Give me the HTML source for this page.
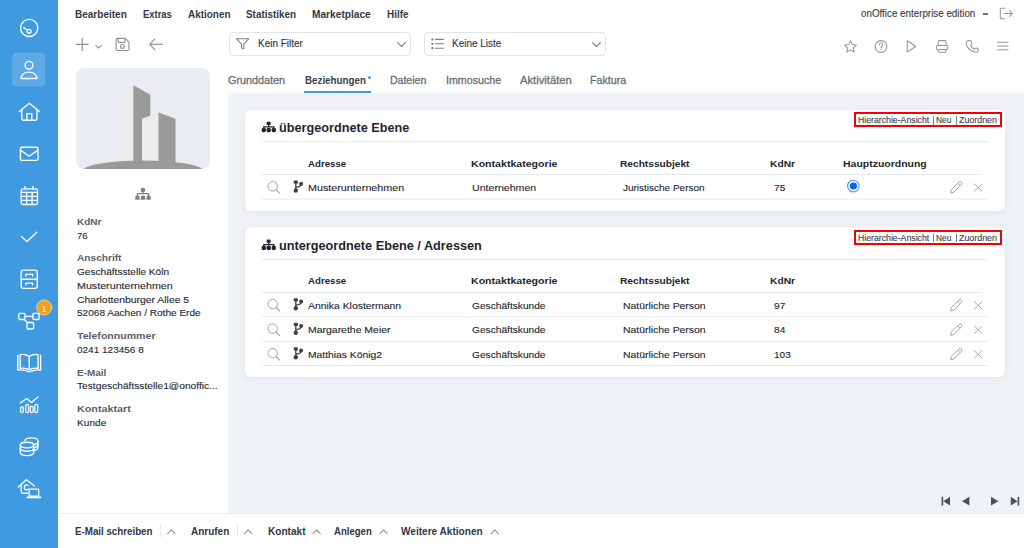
<!DOCTYPE html>
<html><head><meta charset="utf-8">
<style>
*{margin:0;padding:0;box-sizing:border-box}
html,body{width:1024px;height:548px;overflow:hidden;background:#fff;font-family:"Liberation Sans",sans-serif;color:#333}
.a{position:absolute;white-space:nowrap}
#sb{position:absolute;left:0;top:0;width:58px;height:548px;background:#3f9ae0}
#sb svg{position:absolute;left:0;top:0}
.menu{top:7px;font-size:10px;font-weight:bold;color:#333b47;line-height:14px}
.tab{top:73px;font-size:10.5px;color:#6c727b;line-height:14px}
#gray{position:absolute;left:228px;top:93px;width:796px;height:420px;background:#f0f3f6}
.card{position:absolute;left:245px;width:760px;background:#fff;border-radius:6px;box-shadow:0 0 1px rgba(40,60,90,0.06),0 2px 8px rgba(40,60,90,0.07)}
.ttl{font-size:12.7px;font-weight:bold;color:#1f2530;line-height:16px}
.hd{font-size:10.3px;font-weight:bold;color:#262c36;line-height:14px}
.td{font-size:10.4px;color:#262c36;line-height:14px}
.hl{position:absolute;height:1px;background:#e6eaef}
.red{position:absolute;border:2px solid #e2001a;font-size:9.1px;color:#333;line-height:10px;padding:0 0 0 2px}
.lbl{font-size:10.3px;font-weight:bold;color:#5f6670;line-height:14px}
.val{font-size:10.2px;color:#2f343b;line-height:14px}
.t{line-height:14px;transform-origin:0 0}
.bb{top:525px;font-size:10px;font-weight:bold;color:#2f3540;line-height:14px}
</style></head><body>

<div id="sb">
<svg width="58" height="548" viewBox="0 0 58 548" fill="none" stroke="#fff" stroke-width="1.35" stroke-linecap="round" stroke-linejoin="round">
 <!-- dashboard -->
 <circle cx="29.2" cy="27.9" r="8.6"/>
 <circle cx="29.1" cy="31.3" r="1.9"/>
 <line x1="23.6" y1="27.6" x2="27.4" y2="30"/>
 <!-- active -->
 <rect x="12" y="52.5" width="33.2" height="34" rx="4.5" fill="rgba(255,255,255,0.16)" stroke="none"/>
 <circle cx="29" cy="65.3" r="3.9"/>
 <path d="M21.1 78.5 C21.3 74.3 24.8 72.1 29 72.1 C33.2 72.1 36.7 74.3 36.9 78.5 Z"/>
 <!-- home -->
 <path d="M19.3 111.6 L29.3 103.2 L39.4 111.6"/>
 <path d="M21.8 109.6 V118.5 Q21.8 120.2 23.5 120.2 H35.3 Q37 120.2 37 118.5 V109.6"/>
 <path d="M26.9 120.2 V113.6 H31.8 V120.2"/>
 <!-- mail -->
 <rect x="20.4" y="147.2" width="17.6" height="13.2" rx="1.6"/>
 <path d="M20.8 150.4 L29.2 156.3 L37.6 150.4"/>
 <!-- calendar -->
 <rect x="21.2" y="188.9" width="16.3" height="15.6" rx="1.8"/>
 <line x1="21.2" y1="192.3" x2="37.5" y2="192.3"/>
 <line x1="25" y1="186.4" x2="25" y2="189"/><line x1="33" y1="186.4" x2="33" y2="189"/>
 <path d="M21.5 196.4 H37.3 M21.5 200.4 H37.3 M26.6 192.5 V204.3 M32.1 192.5 V204.3" stroke-width="1.3"/>
 <!-- check -->
 <path d="M21.4 236.6 L26.9 241.6 L36.8 232.3"/>
 <!-- cabinet -->
 <rect x="21.2" y="270.1" width="16" height="18.2" rx="2"/>
 <line x1="21.2" y1="279.2" x2="37.2" y2="279.2"/>
 <path d="M25.8 276 V274.4 H32.6 V276 M25.8 284.8 V283.2 H32.6 V284.8" stroke-width="1.3"/>
 <!-- network -->
 <rect x="18.8" y="313.3" width="6.2" height="6.2" rx="1.2" stroke-width="1.3"/>
 <rect x="32.9" y="313.3" width="6.2" height="6.2" rx="1.2" stroke-width="1.3"/>
 <rect x="27" y="322.5" width="6.6" height="6.5" rx="1.2" stroke-width="1.3"/>
 <line x1="25" y1="316.4" x2="32.9" y2="316.4" stroke-width="1.3"/>
 <line x1="24.2" y1="319.5" x2="27.6" y2="322.8" stroke-width="1.3"/>
 <circle cx="44.2" cy="307.5" r="7.6" fill="#f1a01f" stroke="#fcd79a" stroke-width="0.8"/>
 <!-- book -->
 <path d="M20.2 354.6 Q25 353.6 29.2 356.4 Q33.4 353.6 38.1 354.6 V368.4 Q33.4 367.4 29.2 369.8 Q25 367.4 20.2 368.4 Z"/>
 <line x1="29.2" y1="356.4" x2="29.2" y2="369.4"/>
 <path d="M17.8 355.2 V370 Q23.5 369.4 29.2 371.8 Q34.9 369.4 40.6 370 V355.2"/>
 <!-- chart -->
 <path d="M20.3 403 L26.9 398.5 L31.5 402.4 L38 397"/>
 <rect x="20.7" y="406.6" width="2.6" height="6" rx="1.3" stroke-width="1.2"/>
 <rect x="25.8" y="404.4" width="2.8" height="8.2" rx="1.4" stroke-width="1.2"/>
 <rect x="30.3" y="406.3" width="2.8" height="6.3" rx="1.4" stroke-width="1.2"/>
 <rect x="34.8" y="404.4" width="2.9" height="8.2" rx="1.4" stroke-width="1.2"/>
 <!-- coins -->
 <path d="M24.8 440.8 C25.3 438.9 28.2 437.9 31.4 437.9 C35 437.9 38 439 38 440.9 V447.5 C38 449 36.4 449.9 34 450.3"/>
 <path d="M34 444.3 C36.4 444 38 443 38 441.4 M34 447.6 C36.4 447.2 38 446.3 38 444.8"/>
 <ellipse cx="27" cy="445" rx="6.7" ry="2.8"/>
 <path d="M20.3 445 V452.6 C20.3 454.3 23.3 455.6 27 455.6 C30.7 455.6 33.7 454.3 33.7 452.6 V445"/>
 <path d="M20.3 448.3 C20.3 450 23.3 451.2 27 451.2 C30.7 451.2 33.7 450 33.7 448.3" />
 <!-- house laptop -->
 <path d="M18.2 487 L26.4 479.8 L34.4 486"/>
 <path d="M21.2 485 V491.6 Q21.2 493.2 22.8 493.2 H27.4"/>
 <path d="M28.2 485.6 Q27.4 484.8 26.2 484.8 Q24.4 484.8 24.4 487.3 Q24.4 489.8 26.2 489.8 Q27.4 489.8 28.2 489" stroke-width="1.3"/>
 <rect x="29.1" y="489.2" width="9.6" height="7" rx="0.8" stroke-width="1.3"/>
 <line x1="27.4" y1="497.4" x2="40.6" y2="497.4" stroke-width="1.6"/>
</svg>
<div class="a" style="left:41.7px;top:302.5px;font-size:8.5px;color:#fff;line-height:12px">1</div>
</div>

<!-- top menu -->
<div class="a" style="left:983.2px;top:13.4px;width:5px;height:1.2px;background:#70757c"></div>

<svg class="a" style="left:0;top:0" width="1024" height="70" viewBox="0 0 1024 70" fill="none" stroke="#7a7f87" stroke-width="1.2" stroke-linecap="round" stroke-linejoin="round">
 <!-- logout -->
 <path d="M1004.8 8.3 H1001.4 Q1000.3 8.3 1000.3 9.4 V17.6 Q1000.3 18.7 1001.4 18.7 H1004.8" stroke="#979ba2" stroke-width="1.1"/>
 <path d="M1004.3 13.5 H1012.3 M1009.5 10.6 L1012.3 13.5 L1009.5 16.4" stroke="#979ba2" stroke-width="1.1"/>
 <!-- plus -->
 <path d="M82.2 38.4 V50.6 M76.4 44.4 H88.2" stroke="#8a8e95" stroke-width="1.15"/>
 <path d="M95.8 45.4 L98.6 48 L101.4 45.4" stroke="#8a8e95" stroke-width="1.05"/>
 <!-- save -->
 <path d="M117.3 38.3 H125.2 L129 42.1 V49.3 Q129 50.5 127.8 50.5 H117.3 Q116.1 50.5 116.1 49.3 V39.5 Q116.1 38.3 117.3 38.3 Z" stroke="#92969d"/>
 <path d="M118.2 38.4 V41.6 Q118.2 42.3 118.9 42.3 H124.3 Q125 42.3 125 41.6 V38.4" stroke="#92969d"/>
 <circle cx="122.4" cy="46.4" r="1.9" stroke="#92969d"/>
 <!-- back -->
 <path d="M162.5 44.3 H150 M154.7 39.1 L149.7 44.3 L154.7 49.6" stroke="#92969d"/>
 <!-- star -->
 <path d="M850.5 40.6 L852.3 44.6 L856.3 45 L853.3 47.8 L854.2 52 L850.5 49.9 L846.8 52 L847.7 47.8 L844.7 45 L848.7 44.6 Z" stroke="#92969d" stroke-width="1.05"/>
 <!-- help -->
 <circle cx="881" cy="46.5" r="5.9" stroke="#92969d" stroke-width="1.05"/>
 <path d="M879.2 44.8 Q879.2 42.9 881 42.9 Q882.8 42.9 882.8 44.6 Q882.8 45.7 881.7 46.2 Q881 46.6 881 47.6 V48" stroke="#92969d" stroke-width="1.05"/>
 <circle cx="881" cy="49.8" r="0.55" fill="#92969d" stroke="none"/>
 <!-- play -->
 <path d="M907.2 41.2 V51.4 Q907.2 52 907.8 51.6 L915.4 46.8 Q915.9 46.4 915.4 46 L907.8 41 Q907.2 40.6 907.2 41.2 Z" stroke="#92969d" stroke-width="1.05"/>
 <!-- printer -->
 <path d="M938.3 45.5 V42 Q938.3 40.6 939.7 40.6 H944.6 Q946 40.6 946 42 V45.5" stroke="#92969d" stroke-width="1.05"/>
 <rect x="936.4" y="45.5" width="11.4" height="4" rx="1.2" stroke="#92969d" stroke-width="1.05"/>
 <path d="M938.3 49.5 V51 Q938.3 52.2 939.5 52.2 H944.8 Q946 52.2 946 51 V49.5" stroke="#92969d" stroke-width="1.05"/>
 <!-- phone -->
 <path d="M968.6 40.6 L970.4 40.6 Q970.9 40.7 971.1 41.2 L971.8 43.5 Q971.9 44 971.5 44.4 L970.5 45.3 Q971.6 48.1 974.4 49.3 L975.3 48.3 Q975.7 47.9 976.2 48 L977.7 48.6 Q978.2 48.8 978.2 49.3 V50.8 Q978.1 52.2 976.6 52.2 Q970.8 51.8 967.7 47.4 Q966 44.7 966.2 42.4 Q966.4 40.8 968.6 40.6 Z" stroke="#92969d" stroke-width="1.05"/>
 <!-- hamburger -->
 <path d="M997.5 42.2 H1008 M997.5 46 H1008 M997.5 49.7 H1008" stroke="#92969d" stroke-width="1.05"/>
</svg>

<!-- filter boxes -->
<div class="a" style="left:229.4px;top:32.4px;width:182px;height:24px;border:1px solid #e2e6ec;border-radius:4px"></div>
<div class="a" style="left:424.3px;top:32.4px;width:181.5px;height:24px;border:1px solid #e2e6ec;border-radius:4px"></div>
<svg class="a" style="left:0;top:0" width="620" height="60" viewBox="0 0 620 60" fill="none" stroke="#7d828a" stroke-width="1.1" stroke-linecap="round" stroke-linejoin="round">
 <path d="M236.6 38.8 H248.8 L243.8 44.2 V48.8 L241.6 48 V44.2 Z"/>
 <path d="M397.6 42.6 L401.5 46.5 L405.4 42.6"/>
 <path d="M435.4 39.4 H443.6 M435.4 43.8 H443.6 M435.4 48.2 H443.6"/>
 <circle cx="432.4" cy="39.4" r="0.6" fill="#7d828a"/><circle cx="432.4" cy="43.8" r="0.6" fill="#7d828a"/><circle cx="432.4" cy="48.2" r="0.6" fill="#7d828a"/>
 <path d="M592.6 42.6 L596.5 46.5 L600.4 42.6"/>
</svg>

<!-- tabs -->
<div class="a" style="left:367.6px;top:75.5px;width:3.4px;height:3.4px;border-radius:50%;background:#3f9ae0"></div>
<div class="a" style="left:304px;top:91.2px;width:67.2px;height:2.5px;background:#3f9ae0"></div>

<!-- left panel -->
<div class="a" style="left:76px;top:68.2px;width:134px;height:101px;background:#e9ecf0;border-radius:8px;overflow:hidden">
 <svg width="134" height="101" viewBox="76 68.2 134 101">
  <polygon points="117.5,88.7 133.4,85.5 133.4,166 117.5,166" fill="#ececec"/>
  <polygon points="133.4,85.5 150.3,95 150.3,166 133.4,166" fill="#9a9a9a"/>
  <polygon points="142,118.9 158.5,112.8 158.5,166 142,166" fill="#ececec"/>
  <polygon points="158.5,112.8 175.5,118.9 175.5,166 158.5,166" fill="#9a9a9a"/>
  <ellipse cx="143" cy="171" rx="60" ry="10.4" fill="#9a9a9a"/>
 </svg>
</div>
<svg class="a" style="left:0;top:0" width="230" height="210" viewBox="0 0 230 210">
 <g fill="#7b8088">
 <circle cx="143" cy="190" r="2.3"/>
 <path d="M143 191 V193.7 M137.4 196 V193.7 H148.6 V196" stroke="#7b8088" stroke-width="1.3" fill="none"/>
 <path d="M135.2 199.8 V197.6 Q135.2 195.4 137.4 195.4 Q139.6 195.4 139.6 197.6 V199.8 Z M140.8 199.8 V197.6 Q140.8 195.4 143 195.4 Q145.2 195.4 145.2 197.6 V199.8 Z M146.4 199.8 V197.6 Q146.4 195.4 148.6 195.4 Q150.8 195.4 150.8 197.6 V199.8 Z"/>
 </g>
</svg>

<!-- gray content -->
<div id="gray"></div>
<div class="a" style="left:1022px;top:93px;width:1px;height:374px;background:#e6e9ed"></div><div class="a" style="left:1023px;top:93px;width:1px;height:374px;background:#f4f6f8"></div>

<div class="card" style="top:109.5px;height:101.2px"></div>
<div class="a" style="left:853.6px;top:112.3px;width:148.6px;height:15px;border:2.4px solid #f50000"></div>
<div class="a" style="left:933.4px;top:116.0px;width:0.9px;height:8.6px;background:#7d828a"></div>
<div class="a" style="left:956px;top:116.0px;width:0.9px;height:8.6px;background:#7d828a"></div>
<div class="card" style="top:227.3px;height:149.8px"></div>
<div class="a" style="left:853.6px;top:230.10000000000002px;width:148.6px;height:15px;border:2.4px solid #f50000"></div>
<div class="a" style="left:933.4px;top:233.8px;width:0.9px;height:8.6px;background:#7d828a"></div>
<div class="a" style="left:956px;top:233.8px;width:0.9px;height:8.6px;background:#7d828a"></div>
<svg class="a" style="left:0;top:0" width="1024" height="548" viewBox="0 0 1024 548"><g fill="#1f2530"><rect x="266.7" y="121.80" width="3.9" height="3.2"/><path d="M268.65 124.80 V126.80 M263.80 128.80 V126.80 H273.80 V128.80" stroke="#1f2530" stroke-width="1.3" fill="none"/><circle cx="263.80" cy="130.10" r="2.3"/><circle cx="268.70" cy="130.10" r="2.3"/><circle cx="273.80" cy="130.10" r="2.3"/></g><rect x="262" y="141.10" width="726" height="1" fill="#e6e9ee"/><rect x="262" y="174.00" width="720" height="1" fill="#e6e9ee"/><rect x="262" y="198.60" width="726" height="1" fill="#e6e9ee"/><circle cx="272.7" cy="186.3" r="4.7" stroke="#a0a4aa" stroke-width="1" fill="none"/><path d="M276.10 189.70 L279.50 193.20" stroke="#a0a4aa" stroke-width="1.1" stroke-linecap="round"/><rect x="293.7" y="180.50" width="4.2" height="3.2" rx="0.8" fill="#3d424a"/><circle cx="295.80" cy="190.50" r="2.2" fill="#3d424a"/><circle cx="301.10" cy="183.70" r="2" fill="#3d424a"/><path d="M295.80 182.50 V189.50 M295.80 188.50 Q295.80 187.10 298.20 186.90 Q300.90 186.50 301.10 183.90" stroke="#3d424a" stroke-width="1.3" fill="none"/><path d="M950.70 193.00 L951.30 189.60 L958.90 182.20 Q960.30 181.00 961.50 182.20 Q962.50 183.40 961.30 184.60 L953.90 192.20 Z M957.70 183.40 L960.10 185.80" stroke="#a0a4aa" stroke-width="1" fill="none" stroke-linejoin="round"/><path d="M974.4 183.90 L982.00 191.30 M982.00 183.90 L974.4 191.30" stroke="#a6aab0" stroke-width="1" stroke-linecap="round"/><circle cx="853.3" cy="186.10" r="5.75" fill="#fff" stroke="#5ea3ec" stroke-width="1.3"/><circle cx="853.4" cy="186.00" r="3.6" fill="#0b63e0"/><g fill="#1f2530"><rect x="266.7" y="239.60" width="3.9" height="3.2"/><path d="M268.65 242.60 V244.60 M263.80 246.60 V244.60 H273.80 V246.60" stroke="#1f2530" stroke-width="1.3" fill="none"/><circle cx="263.80" cy="247.90" r="2.3"/><circle cx="268.70" cy="247.90" r="2.3"/><circle cx="273.80" cy="247.90" r="2.3"/></g><rect x="262" y="259.10" width="726" height="1" fill="#e6e9ee"/><rect x="262" y="291.90" width="720" height="1" fill="#e6e9ee"/><rect x="262" y="316.30" width="726" height="1" fill="#e6e9ee"/><circle cx="272.7" cy="304.1" r="4.7" stroke="#a0a4aa" stroke-width="1" fill="none"/><path d="M276.10 307.50 L279.50 311.00" stroke="#a0a4aa" stroke-width="1.1" stroke-linecap="round"/><rect x="293.7" y="298.30" width="4.2" height="3.2" rx="0.8" fill="#3d424a"/><circle cx="295.80" cy="308.30" r="2.2" fill="#3d424a"/><circle cx="301.10" cy="301.50" r="2" fill="#3d424a"/><path d="M295.80 300.30 V307.30 M295.80 306.30 Q295.80 304.90 298.20 304.70 Q300.90 304.30 301.10 301.70" stroke="#3d424a" stroke-width="1.3" fill="none"/><path d="M950.70 310.80 L951.30 307.40 L958.90 300.00 Q960.30 298.80 961.50 300.00 Q962.50 301.20 961.30 302.40 L953.90 310.00 Z M957.70 301.20 L960.10 303.60" stroke="#a0a4aa" stroke-width="1" fill="none" stroke-linejoin="round"/><path d="M974.4 301.70 L982.00 309.10 M982.00 301.70 L974.4 309.10" stroke="#a6aab0" stroke-width="1" stroke-linecap="round"/><rect x="262" y="340.80" width="726" height="1" fill="#e6e9ee"/><circle cx="272.7" cy="328.6" r="4.7" stroke="#a0a4aa" stroke-width="1" fill="none"/><path d="M276.10 332.00 L279.50 335.50" stroke="#a0a4aa" stroke-width="1.1" stroke-linecap="round"/><rect x="293.7" y="322.80" width="4.2" height="3.2" rx="0.8" fill="#3d424a"/><circle cx="295.80" cy="332.80" r="2.2" fill="#3d424a"/><circle cx="301.10" cy="326.00" r="2" fill="#3d424a"/><path d="M295.80 324.80 V331.80 M295.80 330.80 Q295.80 329.40 298.20 329.20 Q300.90 328.80 301.10 326.20" stroke="#3d424a" stroke-width="1.3" fill="none"/><path d="M950.70 335.30 L951.30 331.90 L958.90 324.50 Q960.30 323.30 961.50 324.50 Q962.50 325.70 961.30 326.90 L953.90 334.50 Z M957.70 325.70 L960.10 328.10" stroke="#a0a4aa" stroke-width="1" fill="none" stroke-linejoin="round"/><path d="M974.4 326.20 L982.00 333.60 M982.00 326.20 L974.4 333.60" stroke="#a6aab0" stroke-width="1" stroke-linecap="round"/><rect x="262" y="365.00" width="726" height="1" fill="#e6e9ee"/><circle cx="272.7" cy="353.1" r="4.7" stroke="#a0a4aa" stroke-width="1" fill="none"/><path d="M276.10 356.50 L279.50 360.00" stroke="#a0a4aa" stroke-width="1.1" stroke-linecap="round"/><rect x="293.7" y="347.30" width="4.2" height="3.2" rx="0.8" fill="#3d424a"/><circle cx="295.80" cy="357.30" r="2.2" fill="#3d424a"/><circle cx="301.10" cy="350.50" r="2" fill="#3d424a"/><path d="M295.80 349.30 V356.30 M295.80 355.30 Q295.80 353.90 298.20 353.70 Q300.90 353.30 301.10 350.70" stroke="#3d424a" stroke-width="1.3" fill="none"/><path d="M950.70 359.80 L951.30 356.40 L958.90 349.00 Q960.30 347.80 961.50 349.00 Q962.50 350.20 961.30 351.40 L953.90 359.00 Z M957.70 350.20 L960.10 352.60" stroke="#a0a4aa" stroke-width="1" fill="none" stroke-linejoin="round"/><path d="M974.4 350.70 L982.00 358.10 M982.00 350.70 L974.4 358.10" stroke="#a6aab0" stroke-width="1" stroke-linecap="round"/></svg>

<!-- pagination -->
<svg class="a" style="left:930px;top:490px" width="94" height="22" viewBox="930 490 94 22" fill="#4a4f58">
 <rect x="941.6" y="496.8" width="1.6" height="8.8"/>
 <polygon points="950,496.8 950,505.6 943.4,501.2"/>
 <polygon points="969.4,496.8 969.4,505.6 962,501.2"/>
 <polygon points="991,496.8 991,505.6 998.4,501.2"/>
 <polygon points="1010.8,496.8 1010.8,505.6 1017.4,501.2"/>
 <rect x="1017.6" y="496.8" width="1.6" height="8.8"/>
</svg>

<!-- bottom bar -->
<div class="a" style="left:58px;top:513px;width:966px;height:1px;background:#e9ecf0"></div>
<div class="a" style="left:160px;top:525px;width:1px;height:12px;background:#e3e6ea"></div>
<div class="a" style="left:237px;top:525px;width:1px;height:12px;background:#e3e6ea"></div>
<svg class="a" style="left:0;top:520px" width="520" height="20" viewBox="0 520 520 20" fill="none" stroke="#8d9198" stroke-width="1.05" stroke-linecap="round" stroke-linejoin="round">
 <path d="M167.6 533.6 L171.3 529.9 L175 533.6"/>
 <path d="M244.4 533.6 L248.1 529.9 L251.8 533.6"/>
 <path d="M313 533.6 L316.6 529.9 L320.2 533.6"/>
 <path d="M380 533.6 L383.6 529.9 L387.2 533.6"/>
 <path d="M491.2 533.6 L494.8 529.9 L498.4 533.6"/>
</svg>

<div class="a t" style="left:75px;top:7.84px;font-size:10px;font-weight:bold;color:#343a45;transform:scaleX(1.0013)">Bearbeiten</div>
<div class="a t" style="left:143px;top:7.84px;font-size:10px;font-weight:bold;color:#343a45;transform:scaleX(0.9403)">Extras</div>
<div class="a t" style="left:187.5px;top:7.84px;font-size:10px;font-weight:bold;color:#343a45;transform:scaleX(0.9935)">Aktionen</div>
<div class="a t" style="left:246px;top:7.84px;font-size:10px;font-weight:bold;color:#343a45;transform:scaleX(0.9887)">Statistiken</div>
<div class="a t" style="left:312px;top:7.84px;font-size:10px;font-weight:bold;color:#343a45;transform:scaleX(1.0163)">Marketplace</div>
<div class="a t" style="left:386.75px;top:7.84px;font-size:10px;font-weight:bold;color:#343a45;transform:scaleX(0.9922)">Hilfe</div>
<div class="a t" style="left:861.3px;top:6.60px;font-size:10.4px;font-weight:normal;color:#353b45;transform:scaleX(0.9438);-webkit-text-stroke:0.12px #353b45">onOffice enterprise edition</div>
<div class="a t" style="left:257.7px;top:36.33px;font-size:10.6px;font-weight:normal;color:#30353d;transform:scaleX(0.9415);-webkit-text-stroke:0.12px #30353d">Kein Filter</div>
<div class="a t" style="left:452px;top:36.33px;font-size:10.6px;font-weight:normal;color:#30353d;transform:scaleX(0.9396);-webkit-text-stroke:0.12px #30353d">Keine Liste</div>
<div class="a t" style="left:228.4px;top:74.13px;font-size:10px;font-weight:normal;color:#6b7079;transform:scaleX(1.0811);-webkit-text-stroke:0.3px #6b7079">Grunddaten</div>
<div class="a t" style="left:304.7px;top:74.13px;font-size:10px;font-weight:bold;color:#3a404a;transform:scaleX(0.9787)">Beziehungen</div>
<div class="a t" style="left:390px;top:74.13px;font-size:10px;font-weight:normal;color:#6b7079;transform:scaleX(1.0517);-webkit-text-stroke:0.3px #6b7079">Dateien</div>
<div class="a t" style="left:445.5px;top:74.13px;font-size:10px;font-weight:normal;color:#6b7079;transform:scaleX(1.0690);-webkit-text-stroke:0.3px #6b7079">Immosuche</div>
<div class="a t" style="left:519.5px;top:74.13px;font-size:10px;font-weight:normal;color:#6b7079;transform:scaleX(1.1218);-webkit-text-stroke:0.3px #6b7079">Aktivitäten</div>
<div class="a t" style="left:590px;top:74.13px;font-size:10px;font-weight:normal;color:#6b7079;transform:scaleX(1.0693);-webkit-text-stroke:0.3px #6b7079">Faktura</div>
<div class="a t" style="left:76.6px;top:214.90px;font-size:9.8px;font-weight:bold;color:#5b6069;transform:scaleX(1.0231)">KdNr</div>
<div class="a t" style="left:76.6px;top:228.70px;font-size:9.8px;font-weight:normal;color:#262a31;transform:scaleX(0.9636);-webkit-text-stroke:0.12px #262a31">76</div>
<div class="a t" style="left:76.6px;top:251.30px;font-size:9.8px;font-weight:bold;color:#5b6069;transform:scaleX(1.0349)">Anschrift</div>
<div class="a t" style="left:76.6px;top:265.30px;font-size:9.8px;font-weight:normal;color:#262a31;transform:scaleX(1.0302);-webkit-text-stroke:0.12px #262a31">Geschäftsstelle Köln</div>
<div class="a t" style="left:76.6px;top:278.80px;font-size:9.8px;font-weight:normal;color:#262a31;transform:scaleX(1.0915);-webkit-text-stroke:0.12px #262a31">Musterunternehmen</div>
<div class="a t" style="left:76.6px;top:292.60px;font-size:9.8px;font-weight:normal;color:#262a31;transform:scaleX(1.0612);-webkit-text-stroke:0.12px #262a31">Charlottenburger Allee 5</div>
<div class="a t" style="left:76.6px;top:306.30px;font-size:9.8px;font-weight:normal;color:#262a31;transform:scaleX(1.0272);-webkit-text-stroke:0.12px #262a31">52068 Aachen / Rothe Erde</div>
<div class="a t" style="left:76.6px;top:329.30px;font-size:9.8px;font-weight:bold;color:#5b6069;transform:scaleX(1.0789)">Telefonnummer</div>
<div class="a t" style="left:76.6px;top:342.70px;font-size:9.8px;font-weight:normal;color:#262a31;transform:scaleX(1.0202);-webkit-text-stroke:0.12px #262a31">0241 123456 8</div>
<div class="a t" style="left:76.6px;top:365.70px;font-size:9.8px;font-weight:bold;color:#5b6069;transform:scaleX(1.0156)">E-Mail</div>
<div class="a t" style="left:76.6px;top:379.40px;font-size:9.8px;font-weight:normal;color:#262a31;transform:scaleX(1.0413);-webkit-text-stroke:0.12px #262a31">Testgeschäftsstelle1@onoffic...</div>
<div class="a t" style="left:76.6px;top:401.90px;font-size:9.8px;font-weight:bold;color:#5b6069;transform:scaleX(1.1002)">Kontaktart</div>
<div class="a t" style="left:76.6px;top:415.50px;font-size:9.8px;font-weight:normal;color:#262a31;transform:scaleX(1.0343);-webkit-text-stroke:0.12px #262a31">Kunde</div>
<div class="a t" style="left:75px;top:525.03px;font-size:10px;font-weight:bold;color:#30363f;transform:scaleX(0.9752)">E-Mail schreiben</div>
<div class="a t" style="left:191.25px;top:525.03px;font-size:10px;font-weight:bold;color:#30363f;transform:scaleX(0.9979)">Anrufen</div>
<div class="a t" style="left:268px;top:525.03px;font-size:10px;font-weight:bold;color:#30363f;transform:scaleX(1.0075)">Kontakt</div>
<div class="a t" style="left:334.25px;top:525.03px;font-size:10px;font-weight:bold;color:#30363f;transform:scaleX(0.9570)">Anlegen</div>
<div class="a t" style="left:401.25px;top:525.03px;font-size:10px;font-weight:bold;color:#30363f;transform:scaleX(1.0061)">Weitere Aktionen</div>
<div class="a t" style="left:857.5px;top:112.78px;font-size:9px;font-weight:normal;color:#3c4149;transform:scaleX(0.9684);-webkit-text-stroke:0.12px #3c4149">Hierarchie-Ansicht</div>
<div class="a t" style="left:936.4px;top:112.78px;font-size:9px;font-weight:normal;color:#3c4149;transform:scaleX(0.9267);-webkit-text-stroke:0.12px #3c4149">Neu</div>
<div class="a t" style="left:959.4px;top:112.78px;font-size:9px;font-weight:normal;color:#3c4149;transform:scaleX(0.9837);-webkit-text-stroke:0.12px #3c4149">Zuordnen</div>
<div class="a t" style="left:279.2px;top:121.00px;font-size:13px;font-weight:bold;color:#1f2530;transform:scaleX(0.9750)">übergeordnete Ebene</div>
<div class="a t" style="left:308px;top:156.60px;font-size:9.8px;font-weight:bold;color:#22262d;transform:scaleX(0.9892)">Adresse</div>
<div class="a t" style="left:470.5px;top:156.60px;font-size:9.8px;font-weight:bold;color:#22262d;transform:scaleX(1.0809)">Kontaktkategorie</div>
<div class="a t" style="left:620px;top:156.60px;font-size:9.8px;font-weight:bold;color:#22262d;transform:scaleX(1.0378)">Rechtssubjekt</div>
<div class="a t" style="left:769.5px;top:156.60px;font-size:9.8px;font-weight:bold;color:#22262d;transform:scaleX(1.0440)">KdNr</div>
<div class="a t" style="left:842.5px;top:156.60px;font-size:9.8px;font-weight:bold;color:#22262d;transform:scaleX(1.0688)">Hauptzuordnung</div>
<div class="a t" style="left:308px;top:180.90px;font-size:9.8px;font-weight:normal;color:#23272e;transform:scaleX(1.0978);-webkit-text-stroke:0.12px #23272e">Musterunternehmen</div>
<div class="a t" style="left:472px;top:180.90px;font-size:9.8px;font-weight:normal;color:#23272e;transform:scaleX(1.0824);-webkit-text-stroke:0.12px #23272e">Unternehmen</div>
<div class="a t" style="left:622.7px;top:180.90px;font-size:9.8px;font-weight:normal;color:#23272e;transform:scaleX(1.0189);-webkit-text-stroke:0.12px #23272e">Juristische Person</div>
<div class="a t" style="left:773.75px;top:180.90px;font-size:9.8px;font-weight:normal;color:#23272e;transform:scaleX(1.0324);-webkit-text-stroke:0.12px #23272e">75</div>
<div class="a t" style="left:857.5px;top:230.58px;font-size:9px;font-weight:normal;color:#3c4149;transform:scaleX(0.9684);-webkit-text-stroke:0.12px #3c4149">Hierarchie-Ansicht</div>
<div class="a t" style="left:936.4px;top:230.58px;font-size:9px;font-weight:normal;color:#3c4149;transform:scaleX(0.9267);-webkit-text-stroke:0.12px #3c4149">Neu</div>
<div class="a t" style="left:959.4px;top:230.58px;font-size:9px;font-weight:normal;color:#3c4149;transform:scaleX(0.9837);-webkit-text-stroke:0.12px #3c4149">Zuordnen</div>
<div class="a t" style="left:279.2px;top:238.80px;font-size:13px;font-weight:bold;color:#1f2530;transform:scaleX(0.9772)">untergeordnete Ebene / Adressen</div>
<div class="a t" style="left:308px;top:274.40px;font-size:9.8px;font-weight:bold;color:#22262d;transform:scaleX(0.9892)">Adresse</div>
<div class="a t" style="left:470.5px;top:274.40px;font-size:9.8px;font-weight:bold;color:#22262d;transform:scaleX(1.0809)">Kontaktkategorie</div>
<div class="a t" style="left:620px;top:274.40px;font-size:9.8px;font-weight:bold;color:#22262d;transform:scaleX(1.0378)">Rechtssubjekt</div>
<div class="a t" style="left:769.5px;top:274.40px;font-size:9.8px;font-weight:bold;color:#22262d;transform:scaleX(1.0440)">KdNr</div>
<div class="a t" style="left:308px;top:298.70px;font-size:9.8px;font-weight:normal;color:#23272e;transform:scaleX(1.0607);-webkit-text-stroke:0.12px #23272e">Annika Klostermann</div>
<div class="a t" style="left:472px;top:298.70px;font-size:9.8px;font-weight:normal;color:#23272e;transform:scaleX(1.0382);-webkit-text-stroke:0.12px #23272e">Geschäftskunde</div>
<div class="a t" style="left:622.7px;top:298.70px;font-size:9.8px;font-weight:normal;color:#23272e;transform:scaleX(1.0601);-webkit-text-stroke:0.12px #23272e">Natürliche Person</div>
<div class="a t" style="left:773.75px;top:298.70px;font-size:9.8px;font-weight:normal;color:#23272e;transform:scaleX(1.0324);-webkit-text-stroke:0.12px #23272e">97</div>
<div class="a t" style="left:308px;top:323.20px;font-size:9.8px;font-weight:normal;color:#23272e;transform:scaleX(1.0670);-webkit-text-stroke:0.12px #23272e">Margarethe Meier</div>
<div class="a t" style="left:472px;top:323.20px;font-size:9.8px;font-weight:normal;color:#23272e;transform:scaleX(1.0382);-webkit-text-stroke:0.12px #23272e">Geschäftskunde</div>
<div class="a t" style="left:622.7px;top:323.20px;font-size:9.8px;font-weight:normal;color:#23272e;transform:scaleX(1.0601);-webkit-text-stroke:0.12px #23272e">Natürliche Person</div>
<div class="a t" style="left:773.75px;top:323.20px;font-size:9.8px;font-weight:normal;color:#23272e;transform:scaleX(1.0324);-webkit-text-stroke:0.12px #23272e">84</div>
<div class="a t" style="left:308px;top:347.70px;font-size:9.8px;font-weight:normal;color:#23272e;transform:scaleX(1.0533);-webkit-text-stroke:0.12px #23272e">Matthias König2</div>
<div class="a t" style="left:472px;top:347.70px;font-size:9.8px;font-weight:normal;color:#23272e;transform:scaleX(1.0382);-webkit-text-stroke:0.12px #23272e">Geschäftskunde</div>
<div class="a t" style="left:622.7px;top:347.70px;font-size:9.8px;font-weight:normal;color:#23272e;transform:scaleX(1.0601);-webkit-text-stroke:0.12px #23272e">Natürliche Person</div>
<div class="a t" style="left:773.75px;top:347.70px;font-size:9.8px;font-weight:normal;color:#23272e;transform:scaleX(1.0247);-webkit-text-stroke:0.12px #23272e">103</div>
</body></html>
